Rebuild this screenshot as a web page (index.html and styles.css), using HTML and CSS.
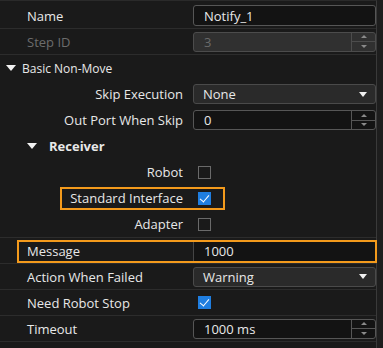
FILE: index.html
```html
<!DOCTYPE html>
<html lang="en">
<head>
    <meta charset="UTF-8">
    <title>Step Properties</title>
    <link rel="stylesheet" href="styles.css">
</head>
<body>
<div class="panel">
    <div class="row sep">
        <div class="label">Name</div>
        <div class="value"><div class="field text">Notify_1</div></div>
    </div>
    <div class="row sep">
        <div class="label off">Step ID</div>
        <div class="value">
            <div class="field spin disabled">
                <span class="val">3</span>
                <span class="spin-btns"><i class="up"></i><i class="down"></i></span>
            </div>
        </div>
    </div>

    <!--group-->
    <div class="group sep">
        <div class="row head">
            <span class="tri"></span><span>Basic Non-Move</span>
        </div>
        <div class="row sub">
            <div class="label">Skip Execution</div>
            <div class="value"><div class="field combo"><span class="val">None</span><span class="arrow"></span></div></div>
        </div>
        <div class="row sub">
            <div class="label">Out Port When Skip</div>
            <div class="value">
                <div class="field spin">
                    <span class="val">0</span>
                    <span class="spin-btns"><i class="up"></i><i class="down"></i></span>
                </div>
            </div>
        </div>
        <div class="row head2">
            <span class="tri"></span><span>Receiver</span>
        </div>
        <div class="row sub">
            <div class="label">Robot</div>
            <div class="value"><span class="check"></span></div>
        </div>
        <div class="row sub marked">
            <div class="label">Standard Interface</div>
            <div class="value"><span class="check on"></span></div>
            <div class="mark mark-std"></div>
        </div>
        <div class="row sub">
            <div class="label">Adapter</div>
            <div class="value"><span class="check"></span></div>
        </div>
    </div>

    <div class="row sep marked">
        <div class="label">Message</div>
        <div class="value"><div class="field plain">1000</div></div>
        <div class="mark mark-msg"></div>
    </div>
    <div class="row sep">
        <div class="label">Action When Failed</div>
        <div class="value"><div class="field combo"><span class="val">Warning</span><span class="arrow"></span></div></div>
    </div>
    <div class="row sep">
        <div class="label">Need Robot Stop</div>
        <div class="value"><span class="check on"></span></div>
    </div>
    <div class="row sep">
        <div class="label">Timeout</div>
        <div class="value">
            <div class="field spin">
                <span class="val">1000 ms</span>
                <span class="spin-btns"><i class="up"></i><i class="down"></i></span>
            </div>
        </div>
    </div>
</div>
</body>
</html>
```

FILE: styles.css
```css
html, body {
    margin: 0;
    padding: 0;
    background-color: #1e1e1e;
}

body {
    font-family: "Open Sans", "Noto Sans", sans-serif;
    font-size: 13px;
    color: #e8e8e8;
}

.panel {
    width: 377px;
    height: 348px;
    padding-top: 2px;
    box-sizing: border-box;
    background-color: #1a1a1a;
    border-top: 1px solid #2a2a2a;
    border-right: 1px solid #3a3a3a;
}

.row {
    display: flex;
    align-items: center;
    height: 26px;
    box-sizing: border-box;
    position: relative;
}

.sep {
    border-bottom: 1px solid #2c2c2c;
}

.group .row {
    border-bottom: none;
}

.label {
    width: 193px;
    padding-left: 27px;
    box-sizing: border-box;
    white-space: nowrap;
}

.label.off {
    color: #6c6c6c;
}

.sub .label {
    padding-left: 0;
    padding-right: 10px;
    text-align: right;
}

.value {
    width: 183px;
    display: flex;
    align-items: center;
}

/* group headers */
.head {
    padding-left: 6px;
    font-size: 12px;
    gap: 6px;
}

.head2 {
    padding-left: 27px;
    font-weight: bold;
    gap: 12px;
}

.tri {
    width: 0;
    height: 0;
    border-left: 5px solid transparent;
    border-right: 5px solid transparent;
    border-top: 6px solid #f2f2f2;
}

/* fields */
.field {
    width: 183px;
    height: 20px;
    box-sizing: border-box;
    border: 1px solid #565656;
    border-radius: 3px;
    display: flex;
    align-items: center;
    padding-left: 10px;
    background-color: #131313;
}

.field .val {
    flex: 1;
}

.text {
    height: 21px;
}

.disabled {
    background-color: #303030;
    border-color: #4c4c4c;
    color: #6a6a6a;
}

.combo {
    background-color: #2a2a2a;
    border-color: #4a4a4a;
    padding-left: 9px;
}

.combo .arrow {
    width: 0;
    height: 0;
    margin-right: 8px;
    border-left: 4px solid transparent;
    border-right: 4px solid transparent;
    border-top: 5px solid #f0f0f0;
}

.plain {
    border: none;
    border-left: 1px solid #454545;
    border-radius: 0;
    height: 22px;
    padding-left: 10px;
    background-color: #131313;
}

.spin {
    padding-right: 0;
}

.spin-btns {
    width: 23px;
    height: 100%;
    border-left: 1px solid #565656;
    display: flex;
    flex-direction: column;
}

.spin-btns i {
    flex: 1;
    display: flex;
    align-items: center;
    justify-content: center;
}

.spin-btns .up {
    border-bottom: 1px solid #565656;
}

.spin-btns .up::after {
    content: "";
    border-left: 3px solid transparent;
    border-right: 3px solid transparent;
    border-bottom: 3px solid #8a8a8a;
}

.spin-btns .down::after {
    content: "";
    border-left: 3px solid transparent;
    border-right: 3px solid transparent;
    border-top: 3px solid #8a8a8a;
}

.disabled .spin-btns,
.disabled .spin-btns .up {
    border-color: #4c4c4c;
}

/* checkbox */
.check {
    width: 13px;
    height: 13px;
    margin-left: 5px;
    box-sizing: border-box;
    border: 1px solid #6a6a6a;
    position: relative;
}

.check.on {
    background-color: #1f7ee0;
    border-color: #1f7ee0;
}

.check.on::after {
    content: "";
    position: absolute;
    left: 3px;
    top: 0px;
    width: 4px;
    height: 8px;
    border-right: 1.5px solid #ffffff;
    border-bottom: 1.5px solid #ffffff;
    transform: rotate(40deg);
}

/* highlight frames */
.mark {
    position: absolute;
    border: 2px solid #f39a1c;
    box-sizing: border-box;
}

.mark-std {
    left: 60px;
    width: 165px;
    top: 2px;
    height: 23px;
}

.mark-msg {
    left: 17px;
    width: 360px;
    top: 2px;
    height: 23px;
}
```
